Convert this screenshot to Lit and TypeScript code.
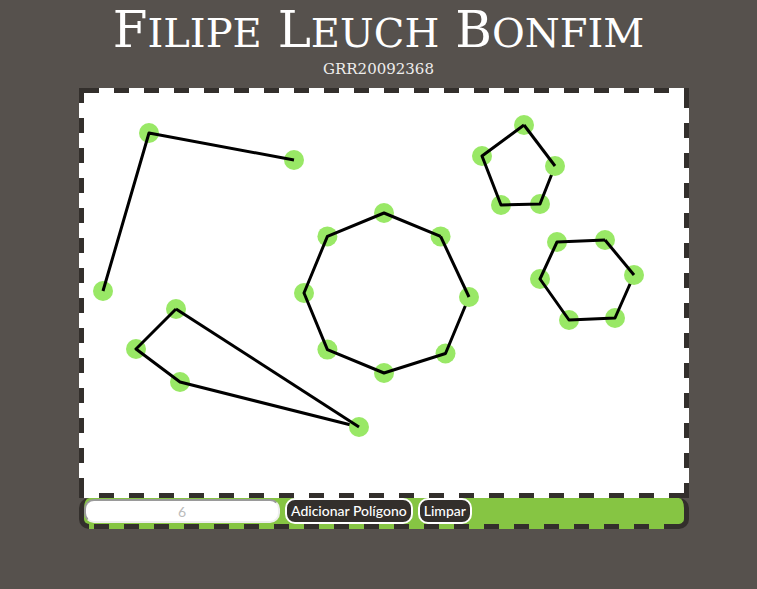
import { LitElement, html, svg, css } from "lit";
import { customElement, state } from "lit/decorators.js";

type Point = [number, number];
interface Shape {
  points: Point[];
  closed: boolean;
}

const initialShapes: Shape[] = [
  { closed: false, points: [[19, 198], [65, 40], [210, 67]] },
  { closed: true, points: [[275, 334], [96, 289], [52, 256], [92, 216]] },
  {
    closed: true,
    points: [[385, 204], [361.5, 260.5], [300, 280], [243.4, 256.6], [220, 200], [243.4, 143.4], [300, 120], [356.6, 143.4]],
  },
  { closed: true, points: [[471, 73], [456, 111], [417, 112], [398, 63], [440, 32]] },
  { closed: true, points: [[550, 182], [531, 225], [485, 227], [456, 186], [473, 149], [521, 147]] },
];

@customElement("app-root")
export class AppRoot extends LitElement {
  @state() private shapes: Shape[] = initialShapes;

  static styles = css`
    :host {
      display: block;
      box-sizing: border-box;
      min-height: 100vh;
      background: #56514d;
      color: #fff;
      --ink: #332f2c;
      --green: #86c543;
    }
    * {
      box-sizing: border-box;
    }
    header {
      text-align: center;
      padding-top: 1px;
    }
    h1 {
      margin: 0;
      font: 400 50px/58px "DejaVu Serif", serif;
      text-transform: uppercase;
    }
    .small {
      font-size: 40px;
      line-height: 1;
    }
    p {
      margin: 0;
      font: 400 15px/20px "DejaVu Serif", serif;
      color: #eeedec;
    }
    main {
      padding: 9px 68px 0 79px;
    }
    .board {
      padding: 5px;
      background:
        repeating-linear-gradient(to right, var(--ink) 0 15px, transparent 15px 30px) 5px 0 / calc(100% - 5px) 5px no-repeat,
        repeating-linear-gradient(to bottom, var(--ink) 0 15px, transparent 15px 30px) 100% 5px / 5px calc(100% - 5px) no-repeat,
        repeating-linear-gradient(to left, var(--ink) 0 15px, transparent 15px 30px) 0 100% / calc(100% - 5px) 5px no-repeat,
        repeating-linear-gradient(to top, var(--ink) 0 15px, transparent 15px 30px) 0 0 / 5px calc(100% - 5px) no-repeat,
        #fff;
    }
    .drawing {
      display: block;
      width: 100%;
    }
    .edge {
      fill: none;
      stroke: #000;
      stroke-width: 3;
      stroke-linejoin: round;
    }
    .vertex {
      fill: #99e866;
    }
    .tools {
      position: relative;
      display: flex;
      align-items: center;
      gap: 5px;
      border: 5px solid var(--ink);
      border-top: 0;
      border-radius: 10px;
      background: var(--green);
    }
    .tools::after {
      content: "";
      position: absolute;
      left: 5px;
      right: 5px;
      bottom: -5px;
      height: 5px;
      background: repeating-linear-gradient(to left, var(--ink) 0 15px, var(--green) 15px 30px);
    }
    input,
    button {
      margin: 0;
      border-radius: 10px;
      font: 500 14px/20px Lato, "Noto Sans", sans-serif;
    }
    input {
      width: 196px;
      height: 24px;
      padding: 0;
      border: 2px inset #eee;
      background: #fff;
      text-align: center;
      font-weight: 400;
      color: #333;
    }
    input::placeholder {
      color: #bbb;
    }
    button {
      height: 26px;
      padding: 0 4px;
      border: 2px solid #fff;
      background: var(--ink);
      color: #fff;
    }
  `;

  private addPolygon(event: Event) {
    event.preventDefault();
    const input = this.renderRoot.querySelector("input")!;
    const sides = Math.max(3, Number(input.value) || 6);
    const points = Array.from({ length: sides }, (_, i): Point => {
      const angle = (2 * Math.PI * i) / sides;
      return [300 + 80 * Math.cos(angle), 200 + 80 * Math.sin(angle)];
    });
    this.shapes = [...this.shapes, { points, closed: true }];
  }

  // The first vertex covers the start of the first edge; the closing edge ends on top of it.
  private renderShape({ points, closed }: Shape) {
    const [first] = points;
    const last = points[points.length - 1];
    const dot = ([x, y]: Point) => svg`<circle class="vertex" cx=${x} cy=${y} r="10"></circle>`;
    const edge = (line: Point[]) => svg`<polyline class="edge" points=${line.join(" ")}></polyline>`;
    return closed
      ? svg`${points.slice(1).map(dot)}${edge(points)}${dot(first)}${edge([last, first])}`
      : svg`${points.map(dot)}${edge(points)}`;
  }

  render() {
    return html`
      <header>
        <h1>F<span class="small">ilipe</span> L<span class="small">euch</span> B<span class="small">onfim</span></h1>
        <p>GRR20092368</p>
      </header>
      <main>
        <div class="board">
          <svg class="drawing" viewBox="0 0 600 400" role="img" aria-label="Polígonos">
            ${this.shapes.map((shape) => this.renderShape(shape))}
          </svg>
        </div>
        <form class="tools" @submit=${this.addPolygon}>
          <input type="text" inputmode="numeric" placeholder="6" aria-label="Número de lados" />
          <button type="submit">Adicionar Polígono</button>
          <button type="button" @click=${() => (this.shapes = [])}>Limpar</button>
        </form>
      </main>
    `;
  }
}
